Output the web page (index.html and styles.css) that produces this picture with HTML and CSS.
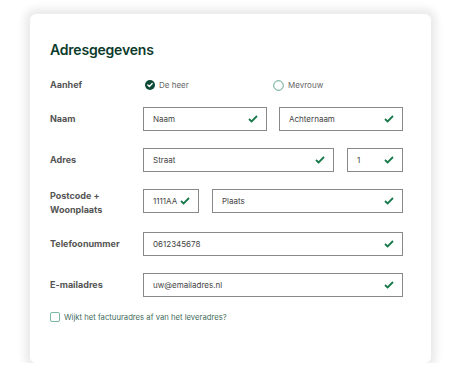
FILE: index.html
```html
<!DOCTYPE html>
<html lang="nl">
<head>
    <meta charset="UTF-8">
    <meta name="viewport" content="width=device-width, initial-scale=1.0">
    <title>Adresgegevens</title>
    <link rel="stylesheet" href="styles.css">
</head>
<body>
    <div class="card">
        <h1>Adresgegevens</h1>

        <div class="row row-aanhef">
            <div class="label">Aanhef</div>
            <div class="fields radios">
                <label class="radio checked">
                    <svg width="10" height="10" viewBox="0 0 10 10"><circle cx="5" cy="5" r="5" fill="#0f4a37"/><path d="M2.8 5.1 L4.4 6.6 L7.2 3.6" fill="none" stroke="#fff" stroke-width="1.4" stroke-linecap="round" stroke-linejoin="round"/></svg>
                    <span>De heer</span>
                </label>
                <label class="radio">
                    <svg width="11" height="11" viewBox="0 0 11 11"><circle cx="5.5" cy="5.5" r="4.8" fill="none" stroke="#5aa589" stroke-width="1"/></svg>
                    <span>Mevrouw</span>
                </label>
            </div>
        </div>

        <div class="row">
            <div class="label">Naam</div>
            <div class="fields">
                <div class="input w-half">Naam<svg class="check" width="10" height="8" viewBox="0 0 10 8"><path d="M1 4 L3.6 6.5 L9 1" fill="none" stroke="#17784a" stroke-width="1.8"/></svg></div>
                <div class="input w-half">Achternaam<svg class="check" width="10" height="8" viewBox="0 0 10 8"><path d="M1 4 L3.6 6.5 L9 1" fill="none" stroke="#17784a" stroke-width="1.8"/></svg></div>
            </div>
        </div>

        <div class="row">
            <div class="label">Adres</div>
            <div class="fields gap-wide">
                <div class="input w-long">Straat<svg class="check" width="10" height="8" viewBox="0 0 10 8"><path d="M1 4 L3.6 6.5 L9 1" fill="none" stroke="#17784a" stroke-width="1.8"/></svg></div>
                <div class="input w-short">1<svg class="check" width="10" height="8" viewBox="0 0 10 8"><path d="M1 4 L3.6 6.5 L9 1" fill="none" stroke="#17784a" stroke-width="1.8"/></svg></div>
            </div>
        </div>

        <div class="row row-tall">
            <div class="label label-tall">Postcode +<br>Woonplaats</div>
            <div class="fields gap-wide">
                <div class="input w-short">1111AA<svg class="check" width="10" height="8" viewBox="0 0 10 8"><path d="M1 4 L3.6 6.5 L9 1" fill="none" stroke="#17784a" stroke-width="1.8"/></svg></div>
                <div class="input w-long">Plaats<svg class="check" width="10" height="8" viewBox="0 0 10 8"><path d="M1 4 L3.6 6.5 L9 1" fill="none" stroke="#17784a" stroke-width="1.8"/></svg></div>
            </div>
        </div>

        <div class="row">
            <div class="label">Telefoonummer</div>
            <div class="fields">
                <div class="input w-full">0612345678<svg class="check" width="10" height="8" viewBox="0 0 10 8"><path d="M1 4 L3.6 6.5 L9 1" fill="none" stroke="#17784a" stroke-width="1.8"/></svg></div>
            </div>
        </div>

        <div class="row">
            <div class="label">E-mailadres</div>
            <div class="fields">
                <div class="input w-full">uw@emailadres.nl<svg class="check" width="10" height="8" viewBox="0 0 10 8"><path d="M1 4 L3.6 6.5 L9 1" fill="none" stroke="#17784a" stroke-width="1.8"/></svg></div>
            </div>
        </div>

        <label class="checkbox">
            <span class="box"></span>
            <span>Wijkt het factuuradres af van het leveradres?</span>
        </label>
    </div>
</body>
</html>
```

FILE: styles.css
```css
body {
    margin: 0;
    background-color: #fff;
    font-family: Inter, "Noto Sans", sans-serif;
}
.card {
    width: 401px;
    height: 349px;
    box-sizing: border-box;
    margin: 14px 0 0 30px;
    padding: 26px 28px 0 20px;
    background-color: #fff;
    border-radius: 6px;
    box-shadow: 0 0 8px 5px rgba(0, 0, 0, 0.09);
}
h1 {
    margin: 0 0 13px 0;
    font-size: 14px;
    line-height: 20px;
    font-weight: 600;
    color: #0c3b2c;
    letter-spacing: -0.2px;
}
.row {
    display: flex;
    align-items: center;
    height: 24px;
    margin-bottom: 17px;
}
.row-aanhef {
    margin-bottom: 10px;
}
.row-tall {
    margin-bottom: 19px;
}
.label {
    width: 93px;
    flex-shrink: 0;
    font-size: 9px;
    line-height: 14px;
    font-weight: 700;
    color: #555;
}
.label-tall {
    padding-top: 4px;
}
.fields {
    display: flex;
    gap: 12px;
    width: 260px;
}
.gap-wide {
    gap: 13px;
}
.radios {
    gap: 0;
}
.radio {
    display: flex;
    align-items: center;
    gap: 4px;
    width: 126px;
    padding-left: 2px;
    font-size: 8px;
    color: #666;
}
.input {
    display: flex;
    align-items: center;
    justify-content: space-between;
    height: 24px;
    box-sizing: border-box;
    padding: 0 8px 0 9px;
    border: 1px solid #888;
    font-size: 8px;
    color: #444;
}
.w-half {
    width: 124px;
}
.w-long {
    width: 191px;
}
.w-short {
    width: 56px;
}
.w-full {
    width: 260px;
}
.checkbox {
    display: flex;
    align-items: center;
    gap: 4px;
    margin-top: -2px;
    font-size: 7.7px;
    color: #3f6b5c;
}
.box {
    width: 8px;
    height: 8px;
    border: 1px solid #79b8a2;
    border-radius: 2px;
}
```
